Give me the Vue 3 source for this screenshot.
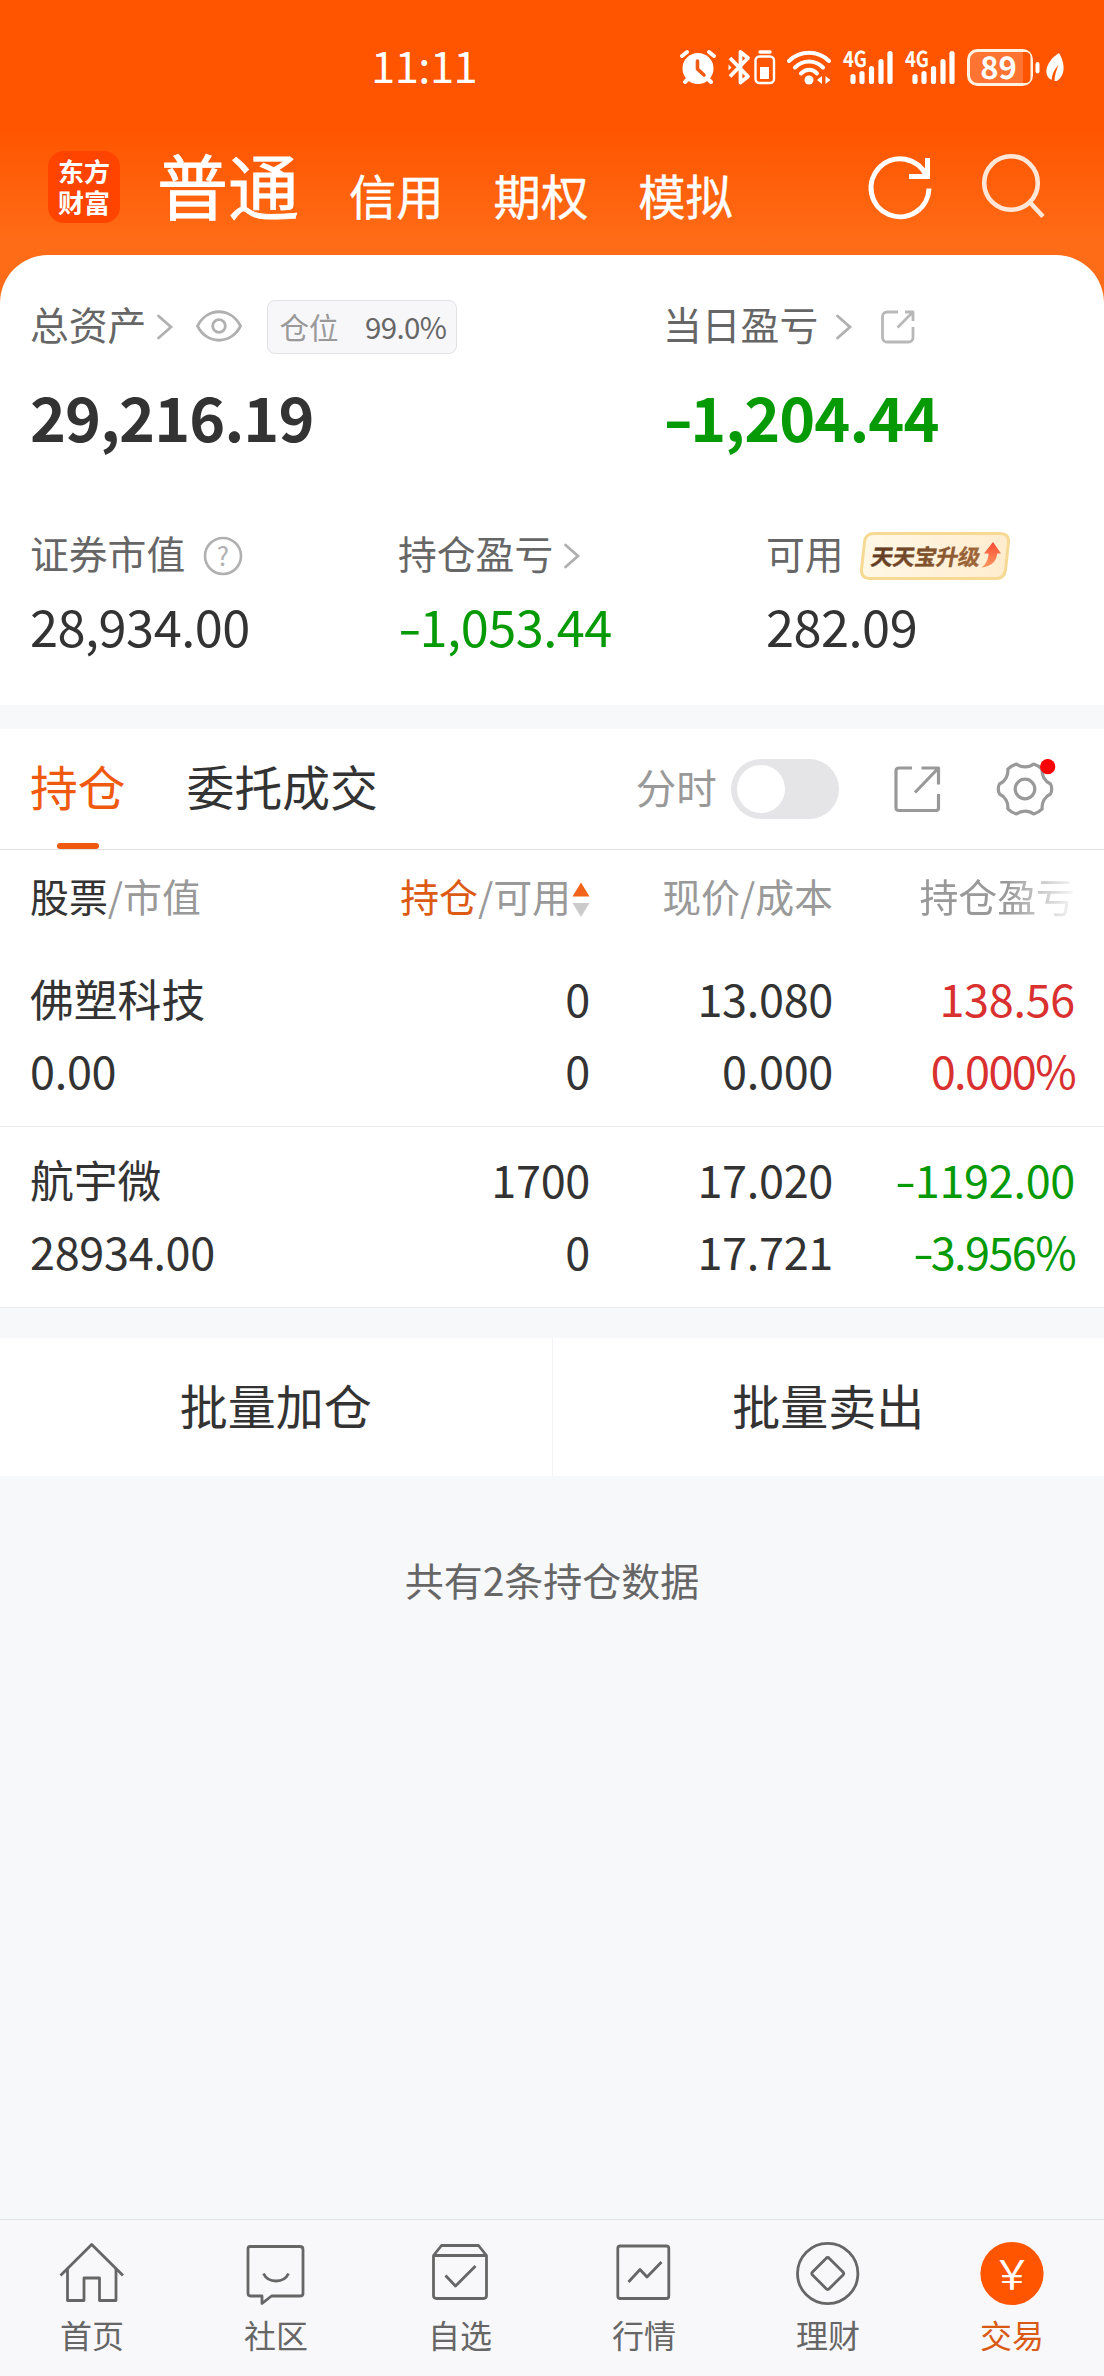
<script setup>
import { ref } from "vue";

const accounts = ["信用", "期权", "模拟"];

const holdings = [
  {
    name: "佛塑科技",
    value: "0.00",
    amount: "0",
    usable: "0",
    price: "13.080",
    cost: "0.000",
    sign: "",
    profit: "138.56",
    rate: "0.000%",
    trend: "up",
  },
  {
    name: "航宇微",
    value: "28934.00",
    amount: "1700",
    usable: "0",
    price: "17.020",
    cost: "17.721",
    sign: "-",
    profit: "1192.00",
    rate: "3.956%",
    trend: "down",
  },
];

const navItems = [
  { key: "home", label: "首页" },
  { key: "club", label: "社区" },
  { key: "favor", label: "自选" },
  { key: "market", label: "行情" },
  { key: "wealth", label: "理财" },
  { key: "trade", label: "交易" },
];

const signalOffsets = [0, 62];
const activeNav = ref("trade");
const minuteOn = ref(false);
</script>

<template>
  <div class="page">
    <header class="top">
      <div class="status-bar">
        <span class="clock">11:11</span>
        <svg class="status-icons" width="392" height="48" viewBox="676 44 392 48">
          <!-- alarm -->
          <g stroke="#fff" stroke-width="4" stroke-linecap="round">
            <path d="M682 56l5-4M714 56l-5-4M685 82l4-4M711 82l-4-4" />
            <circle cx="698" cy="68.500" r="15.500" fill="#fff" stroke="none" />
            <path d="M697.500 61v8l6.500 6" fill="none" stroke="#f05a14" stroke-width="3.600" />
          </g>
          <!-- bluetooth and its battery -->
          <path
            d="M730 58l18 18.500-7.500 6V52l7.500 6-18 18.500"
            fill="none"
            stroke="#fff"
            stroke-width="3.800"
            stroke-linejoin="round"
          />
          <path d="M728.500 64.500l3 3-3 3z" fill="#fff" />
          <rect x="755.500" y="56.500" width="18.500" height="26.500" rx="4" fill="none" stroke="#fff" stroke-width="2.400" />
          <path d="M760 52h10" stroke="#fff" stroke-width="3.400" stroke-linecap="round" />
          <rect x="760" y="67" width="9" height="12" fill="#fff" />
          <!-- wifi -->
          <g fill="none" stroke="#fff" stroke-width="4" stroke-linecap="round">
            <path d="M789 61c11-11 29-11 40 0M795 67.500c8-8 20-8 28 0M801 73.500c5-5 12-5 16 0" />
          </g>
          <circle cx="809" cy="80" r="4.500" fill="#fff" />
          <path d="M817 80l5-4v8zM830.500 80l-5-4v8z" fill="#fff" />
          <!-- sim signals -->
          <g v-for="dx in signalOffsets" :key="dx" :transform="`translate(${dx} 0)`">
            <text class="net" x="843" y="67" textLength="24" lengthAdjust="spacingAndGlyphs">4G</text>
            <path
              d="M853 76.500v5M862 73.500v8M871.500 68.500v13M881 61.500v20M890 53.500v28"
              stroke="#fff"
              stroke-width="5.200"
              stroke-linecap="round"
            />
          </g>
          <!-- battery -->
          <rect x="968.500" y="50.500" width="63" height="34" rx="9" fill="#ff7433" stroke="#fff2e0" stroke-width="3" />
          <path d="M1023 52h3a5 5 0 0 1 4.500 5v21a5 5 0 0 1-4.500 5h-3z" fill="#ff5500" />
          <text class="level" x="998.500" y="79" text-anchor="middle">89</text>
          <path d="M1037.500 64v7.500" stroke="#fff" stroke-width="4" stroke-linecap="round" />
          <path
            d="M1059 53c6 10 7 22-2 28h-2.500c0-6 2-11 4-16-4 4-6.500 9-7 15-10-6-4-20 7.500-27z"
            fill="#fff"
          />
        </svg>
      </div>

      <div class="accounts">
        <div class="logo"><span>东方</span><span>财富</span></div>
        <span class="account-active">普通</span>
        <span v-for="item in accounts" :key="item" class="account">{{ item }}</span>
        <svg class="refresh" width="66" height="66" viewBox="0 0 66 66">
          <g fill="none" stroke="#fff" stroke-width="5">
            <path d="M62 34.500A29 29 0 1 1 59.500 22" />
            <path d="M60.500 4v18.500H42" />
          </g>
        </svg>
        <svg class="search" width="66" height="66" viewBox="0 0 66 66">
          <circle cx="32" cy="30" r="26.800" fill="none" stroke="#ffe6d6" stroke-width="4.600" />
          <path d="M51 49.500l13 14" stroke="#ffe6d6" stroke-width="4.600" />
        </svg>
      </div>
    </header>

    <section class="summary">
      <div class="totals">
        <div class="total">
          <div class="label-row">
            <span class="label">总资产</span>
            <svg class="chevron" width="18" height="28" viewBox="0 0 18 28">
              <path d="M2.500 3l12.500 11L2.500 25" />
            </svg>
            <svg class="eye" width="48" height="34" viewBox="0 0 48 34">
              <path d="M2.500 17C12-2 36-2 45.500 17 36 36 12 36 2.500 17z" />
              <circle cx="24" cy="17" r="6.300" />
            </svg>
            <span class="position"><em>仓位</em><b>99.0%</b></span>
          </div>
          <div class="total-value">29,216.19</div>
        </div>
        <div class="total">
          <div class="label-row">
            <span class="label">当日盈亏</span>
            <svg class="chevron wide" width="18" height="28" viewBox="0 0 18 28">
              <path d="M2.500 3l12.500 11L2.500 25" />
            </svg>
            <svg class="share-small" width="36" height="36" viewBox="0 0 36 36">
              <path d="M18 3H7a4.500 4.500 0 0 0-4.500 4.500v21A4.500 4.500 0 0 0 7 33h21.500a4.500 4.500 0 0 0 4.500-4.500V18" />
              <path d="M25 3h8v9M33 3L17.500 18.500" />
            </svg>
          </div>
          <div class="total-value down"><i class="sign">-</i>1,204.44</div>
        </div>
      </div>

      <div class="details">
        <div class="detail">
          <div class="label-row">
            <span class="label">证券市值</span>
            <svg class="help" width="40" height="40" viewBox="0 0 40 40">
              <circle cx="20" cy="20" r="18" fill="none" stroke="#b0b0b0" stroke-width="2.600" />
              <text x="20" y="29.500" text-anchor="middle">?</text>
            </svg>
          </div>
          <div class="detail-value">28,934.00</div>
        </div>
        <div class="detail">
          <div class="label-row">
            <span class="label">持仓盈亏</span>
            <svg class="chevron" width="18" height="28" viewBox="0 0 18 28">
              <path d="M2.500 3l12.500 11L2.500 25" />
            </svg>
          </div>
          <div class="detail-value down"><i class="sign">-</i>1,053.44</div>
        </div>
        <div class="detail">
          <div class="label-row">
            <span class="label">可用</span>
            <svg class="upgrade" width="152" height="50" viewBox="0 0 152 50">
              <defs>
                <linearGradient id="upgradeFill" x1="0" x2="1" y1="0" y2="0">
                  <stop offset="0" stop-color="#fff8e6" />
                  <stop offset="1" stop-color="#ffecce" />
                </linearGradient>
                <linearGradient id="upgradeText" x1="0" x2="1" y1="0" y2="0">
                  <stop offset="0" stop-color="#5e3a20" />
                  <stop offset="1" stop-color="#a0683a" />
                </linearGradient>
                <linearGradient id="upgradeArrow" x1="0" x2="0" y1="0" y2="1">
                  <stop offset="0" stop-color="#fa4a32" />
                  <stop offset="1" stop-color="#fb9a62" />
                </linearGradient>
              </defs>
              <path
                d="M15 2.500h126q9 0 8.500 8.500l-3 28q-1.200 8.500-9.500 8.500H11Q2 47.500 2.500 38.500l3-27.500Q6.500 2.500 15 2.500z"
                fill="url(#upgradeFill)"
                stroke="#f6da94"
                stroke-width="3"
              />
              <text x="17" y="34" transform="skewX(-10)" textLength="109" fill="url(#upgradeText)" stroke="url(#upgradeText)">天天宝升级</text>
              <path d="M134 11l8 11.500h-3.800c-.7 8-6 13-15.700 14 4.500-3.500 7-8 7-14H125z" fill="url(#upgradeArrow)" />
            </svg>
          </div>
          <div class="detail-value">282.09</div>
        </div>
      </div>
    </section>

    <section class="positions">
      <div class="tabs">
        <span class="tab active">持仓</span>
        <span class="tab">委托成交</span>
        <span class="minute">分时</span>
        <span class="switch" :class="{ on: minuteOn }" @click="minuteOn = !minuteOn"><i></i></span>
        <svg class="share" width="48" height="48" viewBox="0 0 48 48">
          <path d="M19 3H6Q3 3 3 6v37q0 2.500 3 2.500h37q2.500 0 2.500-2.500V29" />
          <path d="M28.500 3h17v16.500M45.500 3L22 27.500" />
        </svg>
        <svg class="gear" width="64" height="64" viewBox="-32 -32 64 64">
          <path
            d="M25.500-5Q26.700-3 26.700 0T25.500 5A14.500 14.500 0 0 0 17.200 19.800Q13.500 23.500 8.700 25A14.500 14.500 0 0 0-8.700 25Q-13.500 23.500-17.200 19.800A14.500 14.500 0 0 0-25.500 5Q-26.700 3-26.700 0T-25.500-5A14.500 14.500 0 0 0-17.200-19.800Q-13.500-23.500-8.700-25A14.500 14.500 0 0 0 8.700-25Q13.500-23.500 17.200-19.800A14.500 14.500 0 0 0 25.500-5z"
          />
          <circle cx="0" cy="0" r="9.800" />
          <circle class="dot" cx="22.700" cy="-22.300" r="7.600" />
        </svg>
      </div>

      <div class="row head">
        <span class="cell"><strong>股票</strong>/市值</span>
        <span class="cell sort">
          <em>持仓</em>/可用
          <svg width="18" height="36" viewBox="0 0 18 36">
            <path d="M9 0.500l8.500 14H0.500z" fill="#f26419" />
            <path d="M9 35l8.500-14H0.500z" fill="#cbcbcb" />
          </svg>
        </span>
        <span class="cell">现价/成本</span>
        <span class="cell fade">持仓盈亏</span>
      </div>

      <div v-for="item in holdings" :key="item.name" class="row stock">
        <div class="cell">
          <div class="name">{{ item.name }}</div>
          <div>{{ item.value }}</div>
        </div>
        <div class="cell">
          <div>{{ item.amount }}</div>
          <div>{{ item.usable }}</div>
        </div>
        <div class="cell">
          <div>{{ item.price }}</div>
          <div>{{ item.cost }}</div>
        </div>
        <div class="cell" :class="item.trend">
          <div><i v-if="item.sign" class="sign">{{ item.sign }}</i>{{ item.profit }}</div>
          <div class="rate"><i v-if="item.sign" class="sign">{{ item.sign }}</i>{{ item.rate }}</div>
        </div>
      </div>
    </section>

    <div class="batch">
      <button type="button">批量加仓</button>
      <button type="button">批量卖出</button>
    </div>

    <p class="count">共有2条持仓数据</p>

    <nav class="nav">
      <a
        v-for="item in navItems"
        :key="item.key"
        class="nav-item"
        :class="{ active: item.key === activeNav }"
        @click="activeNav = item.key"
      >
        <svg width="68" height="68" viewBox="0 0 68 68">
          <g v-if="item.key === 'home'">
            <path d="M2.500 37.500L33.700 6.500 65 37.500" />
            <path d="M9.500 31v31.500h16.500V40h15.500v22.500H58V31" />
          </g>
          <g v-else-if="item.key === 'club'">
            <path d="M8 8.500h50q3 0 3 3v44q0 2.500-3 2.500H29.500l-9.500 7.500V58H8.500Q6 58 6 55V11q0-2.500 2-2.500z" />
            <path d="M21.500 35.500c4.500 10 20.500 10 25 0" />
          </g>
          <g v-else-if="item.key === 'favor'">
            <path d="M7.500 17.500l8-10h37l8 10v40q0 3-3 3h-47q-3 0-3-3zM7.500 17.500h53" />
            <path d="M19.500 37.500l10 10.500 20-20" />
          </g>
          <g v-else-if="item.key === 'market'">
            <rect x="7.800" y="8" width="51" height="52.500" rx="2.500" />
            <path d="M18.500 44l11.500-12.500 7 7.500 14.500-15" />
          </g>
          <g v-else-if="item.key === 'wealth'">
            <circle cx="33.700" cy="35.500" r="30.200" />
            <path d="M32 20.500q1.700-2 3.400 0L49 34q1.400 1.500 0 3L35.400 50.500q-1.700 2-3.400 0L18.500 37q-1.400-1.500 0-3z" />
          </g>
          <g v-else>
            <circle class="coin" cx="34" cy="35.500" r="31.600" />
            <text x="34" y="51" text-anchor="middle">￥</text>
          </g>
        </svg>
        <span>{{ item.label }}</span>
      </a>
    </nav>
  </div>
</template>

<style>
body {
  margin: 0;
  background: #f6f8fa;
}
</style>

<style scoped>
.page {
  width: 1104px;
  height: 2376px;
  display: flex;
  flex-direction: column;
  background: #f7f8fa;
  color: #333;
  font-family: "Noto Sans CJK SC", "Noto Sans", sans-serif;
  overflow: hidden;
}

svg {
  display: block;
  flex: none;
}

em,
b,
strong {
  font-style: normal;
  font-weight: 400;
}

/* the minus is drawn wider than the font's own hyphen */
.sign {
  display: inline-block;
  margin-right: 0.09em;
  font-style: normal;
  transform: scaleX(1.35);
  transform-origin: left center;
}

.top {
  height: 320px;
  flex: none;
  background: linear-gradient(#ff5500 0, #ff5500 130px, #ff6c17 245px, #ff6c17 100%);
  color: #fff;
}

.status-bar {
  display: flex;
  align-items: center;
  height: 136px;
  padding-left: 371px;
}

.clock {
  width: 305px;
  font-size: 43.5px;
  letter-spacing: -0.5px;
  line-height: 60px;
  margin-bottom: 7px;
}

.status-icons {
  text-rendering: geometricPrecision;
}

.net {
  font-size: 22px;
  font-weight: 700;
  fill: #fff;
}

.level {
  font-size: 31px;
  font-weight: 700;
  fill: #fff;
}

.accounts {
  display: flex;
  align-items: flex-end;
  height: 92px;
  padding-left: 48px;
}

.logo {
  display: flex;
  flex-direction: column;
  box-sizing: border-box;
  width: 72px;
  height: 72px;
  margin: 0 37px 5px 0;
  padding-top: 4px;
  border-radius: 16px;
  background: #ff4400;
  text-align: center;
}

.logo span {
  font-size: 26px;
  font-weight: 700;
  line-height: 31px;
}

.account-active {
  font-size: 71px;
  line-height: 90px;
  -webkit-text-stroke: 0.8px #fff;
}

.account {
  margin-left: 50px;
  font-size: 47.3px;
  line-height: 66px;
  -webkit-text-stroke: 0.4px #fff;
}

.refresh {
  margin: 0 0 8px 134px;
}

.search {
  margin: 0 0 9px 46px;
}

.summary {
  box-sizing: border-box;
  height: 450px;
  margin-top: -65px;
  padding: 45px 0 0 30px;
  border-radius: 48px 48px 0 0;
  background: #fff;
  flex: none;
}

.totals {
  display: grid;
  grid-template-columns: 633px 1fr;
}

.label-row {
  display: flex;
  align-items: center;
  height: 54px;
}

.label {
  margin-bottom: 8px;
  color: #666;
  font-size: 38.8px;
  line-height: 54px;
}

.chevron {
  margin-left: 10px;
  fill: none;
  stroke: #b0b0b0;
  stroke-width: 2.8;
  stroke-linecap: round;
}

.chevron.wide {
  margin-left: 17px;
}

.eye {
  margin: 0 0 3px 21px;
  fill: none;
  stroke: #b0b0b0;
  stroke-width: 2.8;
}

.position {
  display: flex;
  align-items: center;
  justify-content: space-between;
  box-sizing: border-box;
  width: 190px;
  height: 54px;
  margin-left: 24px;
  padding: 0 10px 3px 11px;
  border: 1px solid #e2e2e4;
  border-radius: 8px;
  background: #f7f7fa;
  color: #999;
  font-size: 29.5px;
}

.position b {
  color: #666;
  letter-spacing: -0.6px;
}

.total-value {
  margin-top: 18px;
  font-size: 61px;
  font-weight: 700;
  letter-spacing: -0.9px;
  line-height: 88px;
}

.down {
  color: #079a07;
}

.up {
  color: #d93030;
}

.details {
  display: grid;
  grid-template-columns: 368px 368px 1fr;
  margin-top: 69px;
}

.help {
  margin-left: 18px;
}

.help text {
  fill: #b0b0b0;
  font-size: 26px;
}

.upgrade {
  margin-left: 15px;
}

.upgrade text {
  font-size: 22px;
  font-weight: 700;
  stroke-width: 0.4px;
}

.detail-value {
  margin-top: 5px;
  font-size: 50.5px;
  letter-spacing: -0.5px;
  line-height: 74px;
}

.positions {
  margin-top: 24px;
  background: #fff;
  flex: none;
}

.tabs {
  display: flex;
  align-items: center;
  box-sizing: border-box;
  height: 121px;
  padding-left: 30px;
  border-bottom: 1px solid #e2e2e4;
}

.tab {
  position: relative;
  margin-right: 61px;
  font-size: 47.8px;
  line-height: 120px;
  margin-bottom: 6px;
}

.tab.active {
  color: #f05a0f;
}

.tab.active::after {
  content: "";
  position: absolute;
  left: 27px;
  bottom: -3px;
  width: 42px;
  height: 6px;
  border-radius: 3px;
  background: #f05a0f;
}

.minute {
  margin: 0 14px 5px 197px;
  color: #999;
  font-size: 40.5px;
}

.switch {
  box-sizing: border-box;
  width: 108px;
  height: 60px;
  padding: 6px;
  border-radius: 30px;
  background: #e5e5e7;
}

.switch i {
  display: block;
  width: 48px;
  height: 48px;
  border-radius: 50%;
  background: #fff;
}

.switch.on i {
  margin-left: auto;
}

.share-small,
.share,
.gear {
  fill: none;
  stroke: #999;
  stroke-width: 3.2;
  stroke-linejoin: round;
}

.share-small {
  margin-left: 27px;
  stroke: #b8b8b8;
  stroke-width: 2.8;
}

.share {
  margin-left: 54px;
}

.gear {
  margin-left: 52px;
}

.gear .dot {
  fill: #f00;
  stroke: none;
}

.row {
  display: grid;
  grid-template-columns: 1fr 260px 243px 242px;
  box-sizing: border-box;
  padding: 0 29px 0 30px;
}

.cell {
  text-align: right;
}

.cell:first-child {
  text-align: left;
}

.head {
  height: 96px;
  color: #999;
  font-size: 38.9px;
  line-height: 90px;
}

.head strong {
  color: #333;
}

.head em {
  color: #dc5a14;
}

.sort {
  display: flex;
  align-items: center;
  justify-content: flex-end;
  height: 90px;
}

.sort svg {
  margin: 10px 0 0 1px;
}

.fade {
  -webkit-mask-image: linear-gradient(90deg, #000 72%, transparent 102%);
  mask-image: linear-gradient(90deg, #000 72%, transparent 102%);
}

.stock {
  height: 181px;
  padding-top: 16px;
  border-bottom: 1px solid #ececee;
  font-size: 45px;
  letter-spacing: -0.3px;
  line-height: 72px;
}

.name {
  font-size: 43.8px;
  letter-spacing: 0;
}

.rate {
  letter-spacing: -1.6px;
}

.batch {
  display: flex;
  height: 138px;
  margin-top: 30px;
  background: #fff;
  flex: none;
}

.batch button {
  flex: 1;
  padding: 0 0 6px;
  border: 0;
  background: none;
  color: #333;
  font-family: inherit;
  font-size: 48px;
}

.batch button + button {
  border-left: 1px solid #f3f3f5;
}

.count {
  margin: 74px 0 0;
  color: #666;
  font-size: 39px;
  line-height: 58px;
  text-align: center;
}

.nav {
  display: flex;
  box-sizing: border-box;
  height: 157px;
  margin-top: auto;
  padding-top: 18px;
  border-top: 1px solid #e2e4e6;
  background: #f8f8fa;
  flex: none;
}

.nav-item {
  display: flex;
  flex: 1;
  flex-direction: column;
  align-items: center;
  color: #666;
  font-size: 32px;
  line-height: 48px;
}

.nav-item svg {
  fill: none;
  stroke: #666;
  stroke-width: 2.8;
  stroke-linejoin: round;
}

.nav-item span {
  margin-top: 4px;
}

.nav-item.active {
  color: #d95a14;
}

.nav-item .coin {
  fill: #ff5500;
  stroke: none;
}

.nav-item text {
  fill: #fff;
  stroke: none;
  font-size: 40px;
}
</style>
